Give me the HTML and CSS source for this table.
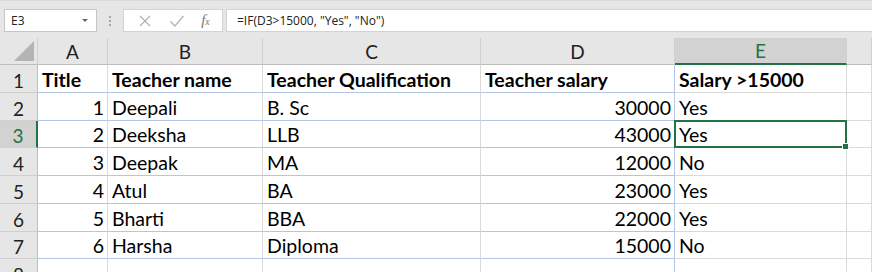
FILE: index.html
```html
<!DOCTYPE html>
<html lang="en">
<head>
  <meta charset="UTF-8" />
  <title>Book1 - Excel</title>
  <link rel="stylesheet" href="styles.css">
</head>
<body>
  <!-- name box + formula bar -->
  <div class="toolbar">
    <div class="namebox">
      <span>E3</span>
      <span class="caret"></span>
    </div>
    <div class="grip">
      <i></i><i></i><i></i>
    </div>
    <div class="fxbtns">
      <svg width="14" height="14" viewBox="0 0 14 14">
        <path d="M2 2 L12 12 M12 2 L2 12" stroke="#b3b3b3" stroke-width="1.3" fill="none"/>
      </svg>
      <svg width="16" height="14" viewBox="0 0 16 14">
        <path d="M1.5 7.5 L6 12 L14.5 2" stroke="#b3b3b3" stroke-width="1.3" fill="none"/>
      </svg>
      <span class="fx">f<sub>x</sub></span>
    </div>
    <div class="formula">=IF(D3&gt;15000, "Yes", "No")</div>
  </div>

  <div class="sheet">
    <!-- column headers -->
    <div class="ch corner"><span class="tri"></span></div>
    <div class="ch">A</div>
    <div class="ch">B</div>
    <div class="ch">C</div>
    <div class="ch">D</div>
    <div class="ch sel">E</div>
    <div class="ch"></div>

    <div class="rh">1</div>
    <div class="c b tb"><b>Title</b></div>
    <div class="c b tb"><b>Teacher name</b></div>
    <div class="c b tb"><b>Teacher Qualification</b></div>
    <div class="c b tb tr"><b>Teacher salary</b></div>
    <div class="c b"><b>Salary &gt;15000</b></div>
    <div class="c"></div>

    <div class="rh">2</div>
    <div class="c num tb">1</div>
    <div class="c tb">Deepali</div>
    <div class="c tb">B. Sc</div>
    <div class="c num tb tr">30000</div>
    <div class="c">Yes</div>
    <div class="c"></div>

    <div class="rh sel">3</div>
    <div class="c num tb">2</div>
    <div class="c tb">Deeksha</div>
    <div class="c tb">LLB</div>
    <div class="c num tb tr">43000</div>
    <div class="c active">Yes</div>
    <div class="c"></div>

    <div class="rh">4</div>
    <div class="c num tb">3</div>
    <div class="c tb">Deepak</div>
    <div class="c tb">MA</div>
    <div class="c num tb tr">12000</div>
    <div class="c">No</div>
    <div class="c"></div>

    <div class="rh">5</div>
    <div class="c num tb">4</div>
    <div class="c tb">Atul</div>
    <div class="c tb">BA</div>
    <div class="c num tb tr">23000</div>
    <div class="c">Yes</div>
    <div class="c"></div>

    <div class="rh">6</div>
    <div class="c num tb">5</div>
    <div class="c tb">Bharti</div>
    <div class="c tb">BBA</div>
    <div class="c num tb tr">22000</div>
    <div class="c">Yes</div>
    <div class="c"></div>

    <div class="rh">7</div>
    <div class="c num tb">6</div>
    <div class="c tb">Harsha</div>
    <div class="c tb">Diploma</div>
    <div class="c num tb tr">15000</div>
    <div class="c">No</div>
    <div class="c"></div>

    <div class="rh">8</div>
    <div class="c"></div>
    <div class="c"></div>
    <div class="c"></div>
    <div class="c tr"></div>
    <div class="c"></div>
    <div class="c"></div>
  </div>
</body>
</html>
```

FILE: styles.css
```css
* {
  box-sizing: border-box;
}
body {
  margin: 0;
  width: 872px;
  height: 272px;
  overflow: hidden;
  background: #fff;
  font-family: "Lato", "Liberation Sans", sans-serif;
}

/* formula bar */
.toolbar {
  height: 38px;
  background: #e6e6e6;
  display: flex;
  align-items: flex-start;
  padding: 8px 0 0 4px;
  border-top: 1px solid #dadada;
  font-family: "Open Sans", "Noto Sans", sans-serif;
  font-size: 12px;
  color: #222;
}
.namebox {
  width: 93px;
  height: 23px;
  background: #fff;
  border: 1px solid #c6c6c6;
  display: flex;
  align-items: center;
  justify-content: space-between;
  padding: 0 8px 0 6px;
}
.caret {
  width: 0;
  height: 0;
  border-left: 3px solid transparent;
  border-right: 3px solid transparent;
  border-top: 3px solid #666;
}
.grip {
  width: 26px;
  height: 23px;
  display: flex;
  flex-direction: column;
  align-items: center;
  justify-content: center;
  gap: 2px;
}
.grip i {
  width: 2px;
  height: 2px;
  background: #a8a8a8;
}
.fxbtns {
  width: 100px;
  height: 23px;
  background: #fff;
  border: 1px solid #d3d3d3;
  display: flex;
  align-items: center;
  justify-content: space-around;
  padding: 0 4px 0 6px;
}
.fx {
  font-family: "Liberation Serif", serif;
  font-style: italic;
  font-size: 15px;
  color: #777;
}
.fx sub {
  font-size: 10px;
  vertical-align: 0;
}
.formula {
  flex: 1;
  height: 23px;
  margin-left: 3px;
  background: #fff;
  border: 1px solid #d3d3d3;
  border-right: none;
  padding: 0 10px;
  display: flex;
  align-items: center;
}

/* grid */
.sheet {
  display: grid;
  grid-template-columns: 38px 70px 155px 218px 194px 172px 1fr;
  grid-template-rows: 27px 28px 28px 27px 28px 28px 28px 27px 28px;
  font-size: 19.5px;
  color: #000;
}
.ch, .rh {
  background: #e6e6e6;
  color: #222;
  display: flex;
  align-items: center;
  justify-content: center;
  font-size: 19px;
}
.ch {
  border-right: 1px solid #d0d0d0;
  border-bottom: 1px solid #bdbdbd;
}
.rh {
  border-right: 1px solid #bdbdbd;
  border-bottom: 1px solid #d0d0d0;
  padding-top: 3px;
}
.ch.sel {
  background: #d2d2d2;
  color: #217346;
  border-bottom: 2px solid #217346;
}
.rh.sel {
  background: #d2d2d2;
  color: #217346;
  border-right: 2px solid #217346;
}
.corner {
  position: relative;
}
.tri {
  position: absolute;
  right: 3px;
  bottom: 3px;
  width: 0;
  height: 0;
  border-left: 20px solid transparent;
  border-bottom: 20px solid #b4b4b4;
}

.c {
  border-right: 1px solid #dadada;
  border-bottom: 1px solid #dadada;
  display: flex;
  align-items: flex-end;
  padding: 0 3px 1px 4px;
  white-space: nowrap;
}
.c.num {
  justify-content: flex-end;
}
/* table range borders */
.c.tb {
  border-bottom-color: #b4c6e7;
}
.c.tr {
  border-right-color: #b4c6e7;
}
.active {
  position: relative;
}
.active::after {
  content: "";
  position: absolute;
  left: -1px;
  top: -1px;
  right: -1px;
  bottom: -1px;
  border: 2px solid #217346;
}
.active::before {
  content: "";
  position: absolute;
  right: -3px;
  bottom: -3px;
  width: 5px;
  height: 5px;
  background: #217346;
  border: 1px solid #fff;
  z-index: 1;
}
```
